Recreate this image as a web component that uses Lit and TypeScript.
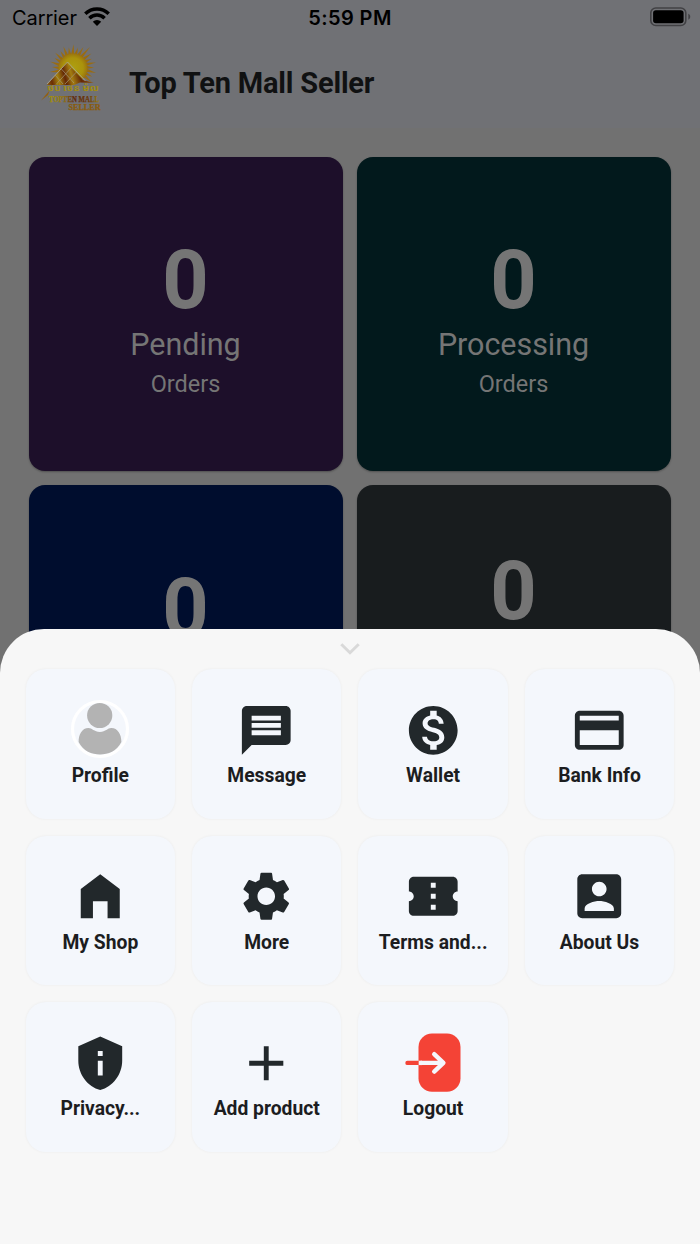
import { LitElement, html, css, svg } from "lit";
import { customElement, property } from "lit/decorators.js";

const paths: Record<string, string> = {
  message: "M20 2H4c-1.1 0-1.99.9-1.99 2L2 22l4-4h14c1.1 0 2-.9 2-2V4c0-1.1-.9-2-2-2zm-2 12H6v-2h12v2zm0-3H6V9h12v2zm0-3H6V6h12v2z",
  wallet: "M12 2C6.48 2 2 6.48 2 12s4.48 10 10 10 10-4.48 10-10S17.52 2 12 2zm1.41 16.09V20h-2.67v-1.93c-1.71-.36-3.16-1.46-3.27-3.4h1.96c.1 1.05.82 1.87 2.65 1.87 1.96 0 2.4-.98 2.4-1.59 0-.83-.44-1.61-2.67-2.14-2.48-.6-4.18-1.62-4.18-3.67 0-1.72 1.39-2.84 3.11-3.21V4h2.67v1.95c1.86.45 2.79 1.86 2.85 3.39H14.3c-.05-1.11-.64-1.87-2.22-1.87-1.5 0-2.4.68-2.4 1.64 0 .84.65 1.39 2.67 1.91s4.18 1.39 4.18 3.91c-.01 1.83-1.38 2.83-3.12 3.16z",
  card: "M20 4H4c-1.11 0-2 .89-2 2v12c0 1.11.89 2 2 2h16c1.11 0 2-.89 2-2V6c0-1.11-.89-2-2-2zm0 14H4v-6h16v6zm0-10H4V6h16v2z",
  home: "M4 21V9l8-6 8 6v12h-5v-7H9v7H4z",
  gear: "M19.14,12.94c0.04-0.3,0.06-0.61,0.06-0.94c0-0.32-0.02-0.64-0.07-0.94l2.03-1.58c0.18-0.14,0.23-0.41,0.12-0.61l-1.92-3.32c-0.12-0.22-0.37-0.29-0.59-0.22l-2.39,0.96c-0.5-0.38-1.03-0.7-1.62-0.94L14.4,2.81c-0.04-0.24-0.24-0.41-0.48-0.41h-3.84c-0.24,0-0.43,0.17-0.47,0.41L9.25,5.35C8.66,5.59,8.12,5.92,7.63,6.29L5.24,5.33c-0.22-0.08-0.47,0-0.59,0.22L2.74,8.87C2.62,9.08,2.66,9.34,2.86,9.48l2.03,1.58C4.84,11.36,4.8,11.69,4.8,12s0.02,0.64,0.07,0.94l-2.03,1.58c-0.18,0.14-0.23,0.41-0.12,0.61l1.92,3.32c0.12,0.22,0.37,0.29,0.59,0.22l2.39-0.96c0.5,0.38,1.03,0.7,1.62,0.94l0.36,2.54c0.05,0.24,0.24,0.41,0.48,0.41h3.84c0.24,0,0.44-0.17,0.47-0.41l0.36-2.54c0.59-0.24,1.13-0.56,1.62-0.94l2.39,0.96c0.22,0.08,0.47,0,0.59-0.22l1.92-3.32c0.12-0.22,0.07-0.47-0.12-0.61L19.14,12.94z M12,15.6c-1.98,0-3.6-1.62-3.6-3.6s1.62-3.6,3.6-3.6s3.6,1.62,3.6,3.6S13.98,15.6,12,15.6z",
  ticket: "M22 10V6c0-1.11-.9-2-2-2H4c-1.1 0-1.99.89-1.99 2v4c1.1 0 1.99.9 1.99 2s-.89 2-2 2v4c0 1.1.9 2 2 2h16c1.1 0 2-.9 2-2v-4c-1.1 0-2-.9-2-2s.9-2 2-2zm-9 7.5h-2v-2h2v2zm0-4.500h-2v-2h2v2zm0-4.500h-2v-2h2v2z",
  about: "M3 5v14c0 1.1.89 2 2 2h14c1.1 0 2-.9 2-2V5c0-1.1-.9-2-2-2H5c-1.11 0-2 .9-2 2zm12 4c0 1.66-1.34 3-3 3s-3-1.34-3-3 1.34-3 3-3 3 1.34 3 3zm-9 8c0-2 4-3.1 6-3.1s6 1.1 6 3.1v1H6v-1z",
  shield: "M12 1 3 5v6c0 5.55 3.84 10.74 9 12 5.16-1.26 9-6.45 9-12V5l-9-4zm-1 6h2v2h-2V7zm0 4h2v6h-2v-6z",
  plus: "M11 5h2v6h6v2h-6v6h-2v-6H5v-2h6z",
};

@customElement("menu-icon")
export class MenuIcon extends LitElement {
  @property() name = "";
  static styles = css`
    :host { display: block; width: 58.5px; height: 58.5px; }
    svg { display: block; width: 100%; height: 100%; overflow: visible; }
  `;
  render() {
    if (this.name === "profile") {
      return html`<svg viewBox="0 0 58.5 58.5">
        <circle cx="29" cy="28" r="27.5" fill="#f4f7fc" stroke="#fff" stroke-width="3.2"/>
        <circle cx="28.7" cy="14.500" r="12.6" fill="#b3b3b3"/>
        <path d="M7.6 41C7.6 33.500 11 27.100 17.500 27.100c3.600 0 5.500 3.800 11.400 3.800S36.500 27.100 40.300 27.100C46.800 27.100 50.400 33.500 50.400 41 46 50 37 53.500 29 53.500S12 50 7.600 41z" fill="#b3b3b3"/>
      </svg>`;
    }
    if (this.name === "logout") {
      return html`<svg viewBox="0 0 58.5 58.5">
        <rect x="14.500" y="-0.500" width="42" height="58.200" rx="13.500" fill="#f44336"/>
        <path d="M3.500 28.900H12M11 28.900H14" stroke="#f44336" stroke-width="4.400" stroke-linecap="round"/>
        <path d="M17 28.900H38M30.200 20.200l9.200 8.700-9.200 8.700" fill="none" stroke="#f4f7fc" stroke-width="4.400" stroke-linecap="round" stroke-linejoin="round"/>
        <path d="M14.700 28.900H18" stroke="#f4f7fc" stroke-width="4.400"/>
      </svg>`;
    }
    return html`<svg viewBox="0 0 24 24"><path fill="#22282b" fill-rule="evenodd" d=${paths[this.name]}></path></svg>`;
  }
}

const rays = Array.from({ length: 20 }, (_, i) => {
  const a = ((-204 + i * 12.6) * Math.PI) / 180;
  const len = i === 12 ? 27 : i % 2 ? 23.5 : 21;
  const pt = (r: number, t: number) => `${(31 + r * Math.cos(t)).toFixed(1)},${(20 + r * Math.sin(t)).toFixed(1)}`;
  return svg`<polygon points="${pt(13.5, a - 0.13)} ${pt(len, a + 0.03)} ${pt(13.5, a + 0.1)}" fill="#9a6c10"/>`;
});

@customElement("brand-logo")
export class BrandLogo extends LitElement {
  static styles = css`
    :host { display: block; width: 60px; height: 64px; }
    svg { display: block; overflow: visible; }
    .word { font-family: "Liberation Serif", serif; font-weight: 700; stroke-width: 0.25; }
    .khmer { font-family: "Noto Sans Khmer", "Khmer OS", sans-serif; font-weight: 700; font-size: 9px; }
  `;
  render() {
    return html`<svg width="60" height="64" viewBox="0 0 60 64">
      <defs>
        <radialGradient id="sun" cx=".5" cy=".5" r=".5"><stop offset="0" stop-color="#aea010"/><stop offset=".7" stop-color="#aa920c"/><stop offset="1" stop-color="#9a740e"/></radialGradient>
        <linearGradient id="roof" gradientUnits="userSpaceOnUse" x1="4" y1="38" x2="48" y2="26"><stop offset="0" stop-color="#9a6c0c"/><stop offset=".15" stop-color="#6a2d06"/><stop offset=".3" stop-color="#a4820e"/><stop offset=".45" stop-color="#642706"/><stop offset=".6" stop-color="#a37c10"/><stop offset=".78" stop-color="#652806"/><stop offset="1" stop-color="#8e550c"/></linearGradient>
        <linearGradient id="ink" gradientUnits="userSpaceOnUse" x1="7" y1="0" x2="57" y2="0"><stop offset="0" stop-color="#a59308"/><stop offset=".3" stop-color="#937010"/><stop offset=".5" stop-color="#602808"/><stop offset=".8" stop-color="#6c3a0a"/><stop offset="1" stop-color="#988008"/></linearGradient>
      </defs>
      ${rays}
      <circle cx="31" cy="20" r="14.500" fill="url(#sun)"/>
      <path d="M5 37 24.700 14.500 41 32l11 3-14-.4-6 2.400z" fill="url(#roof)"/>
      <path d="M5 36 25.500 14 43.500 33" fill="none" stroke="#a8a490" stroke-width=".9"/>
      <path d="M13 27l8 9M19 20.500l13 14.500M14 36.500l15.500-17M23 36l11.500-12" stroke="#a39a78" stroke-width=".7"/>
      <path d="M-1 52.500 7.500 42.500 6 47z" fill="#94600d"/>
      <text class="khmer" x="5" y="43" textLength="52" lengthAdjust="spacingAndGlyphs" fill="#a28c10">ថប់ ថេន ម៉ល</text>
      <text class="word" x="7" y="54" font-size="7.600" textLength="50" lengthAdjust="spacingAndGlyphs" fill="url(#ink)" stroke="url(#ink)">TOPTEN MALL</text>
      <text class="word" x="26.500" y="62.300" font-size="8" textLength="32" lengthAdjust="spacingAndGlyphs" fill="#8a5c0c" stroke="#8a5c0c">SELLER</text>
    </svg>`;
  }
}

const stats = [
  { value: 0, title: "Pending", sub: "Orders", tone: "purple" },
  { value: 0, title: "Processing", sub: "Orders", tone: "teal" },
  { value: 0, title: "", sub: "", tone: "navy" },
  { value: 0, title: "", sub: "", tone: "slate" },
];

const menu = [
  ["profile", "Profile"],
  ["message", "Message"],
  ["wallet", "Wallet"],
  ["card", "Bank Info"],
  ["home", "My Shop"],
  ["gear", "More"],
  ["ticket", "Terms and..."],
  ["about", "About Us"],
  ["shield", "Privacy..."],
  ["plus", "Add product"],
  ["logout", "Logout"],
];

@customElement("app-root")
export class AppRoot extends LitElement {
  static styles = css`
    :host { display: block; position: relative; width: 700px; height: 1244px; overflow: hidden; background: #717171; font-family: Roboto, sans-serif; }
    * { box-sizing: border-box; }
    .header { height: 128px; background: #707175; }
    .status { display: grid; grid-template-columns: 1fr auto 1fr; align-items: center; height: 36px; padding: 0 9px 0 12px; font-family: Inter, sans-serif; color: #000; }
    .carrier { display: flex; align-items: center; gap: 7px; font-size: 20px; letter-spacing: -0.1px; }
    .carrier svg { display: block; margin-top: -3px; }
    .time { font-size: 20px; font-weight: 600; letter-spacing: 0.4px; margin-right: 3px; }
    .battery { justify-self: end; display: block; margin-top: -2px; }
    .brand { display: flex; align-items: center; padding: 0 0 0 42px; height: 92px; }
    .brand brand-logo { margin-top: -5px; }
    .title { margin: 1px 0 0 27px; font-family: Roboto, sans-serif; font-size: 29px; font-weight: 700; line-height: 40px; color: #101112; letter-spacing: -0.2px; white-space: nowrap; }
    .stats { display: grid; grid-template-columns: 314px 314px; grid-auto-rows: 314px; gap: 14px; padding: 29.400px 29px; }
    .stat { display: flex; flex-direction: column; align-items: center; border-radius: 16px; padding-top: 76px; color: #757575; box-shadow: 0 1px 2px rgba(0, 0, 0, 0.3); }
    .purple { background: #1d0f2a; }
    .teal { background: #02191c; }
    .navy { background: #000d2e; }
    .slate { background: #181c1e; padding-top: 58.500px; }
    .value { font-size: 81px; font-weight: 700; line-height: 96px; margin-right: 1px; }
    .name { font-size: 30.500px; line-height: 36px; margin: -2px 1px 0 0; letter-spacing: -0.05px; }
    .sub { font-size: 23.500px; line-height: 28px; margin: 7px 1px 0 0; }
    .sheet { position: absolute; inset: 629px 0 0 0; background: #f7f7f7; border-radius: 44px 44px 0 0; }
    .chevron { display: block; margin: 13px auto 0; }
    .menu { display: grid; grid-template-columns: repeat(4, 149.500px); grid-auto-rows: 149.500px; gap: 17px 16.900px; width: 649px; margin: 14.300px 0 0 25.600px; }
    .tile { display: flex; flex-direction: column; align-items: center; padding-top: 31.300px; border-radius: 20px; background: #f4f7fc; box-shadow: 0 0 3px rgba(0, 0, 0, 0.055); }
    .label { margin-top: 3px; font-size: 19.300px; font-weight: 700; line-height: 28px; color: #1c1d1f; white-space: nowrap; }
  `;
  render() {
    return html`
      <header class="header">
        <div class="status">
          <div class="carrier">
            <span>Carrier</span>
            <svg width="26" height="19" viewBox="0 0 26 19">
              <g fill="none" stroke="#000" stroke-width="3.500"><path d="M1.300 6.700a16.800 16.800 0 0 1 23.400 0"/><path d="M5.400 11.200a10.900 10.900 0 0 1 15.200 0"/></g>
              <path d="M8.800 14.700a6 6 0 0 1 8.400 0L13 19z"/>
            </svg>
          </div>
          <div class="time">5:59 PM</div>
          <svg class="battery" width="42" height="20" viewBox="0 0 42 20">
            <rect x="1.800" y="1" width="35" height="17.500" rx="5" fill="none" stroke="#414144" stroke-width="1.600"/>
            <rect x="4.100" y="3.300" width="30.500" height="13" rx="2.800"/>
            <path d="M39.300 6.800c2.600 1.200 2.600 4.700 0 5.900z" fill="#414144"/>
          </svg>
        </div>
        <div class="brand"><brand-logo></brand-logo><h1 class="title">Top Ten Mall Seller</h1></div>
      </header>
      <main class="stats">
        ${stats.map(
          (s) => html`<section class="stat ${s.tone}">
            <div class="value">${s.value}</div>
            <div class="name">${s.title}</div>
            <div class="sub">${s.sub}</div>
          </section>`
        )}
      </main>
      <div class="sheet">
        <svg class="chevron" width="20" height="13" viewBox="0 0 20 13"><path d="M1.300 2.200 10 10.700 18.700 2.200" fill="none" stroke="#d9d9d9" stroke-width="3"/></svg>
        <nav class="menu">
          ${menu.map(([icon, label]) => html`<div class="tile"><menu-icon name=${icon}></menu-icon><div class="label">${label}</div></div>`)}
        </nav>
      </div>
    `;
  }
}
